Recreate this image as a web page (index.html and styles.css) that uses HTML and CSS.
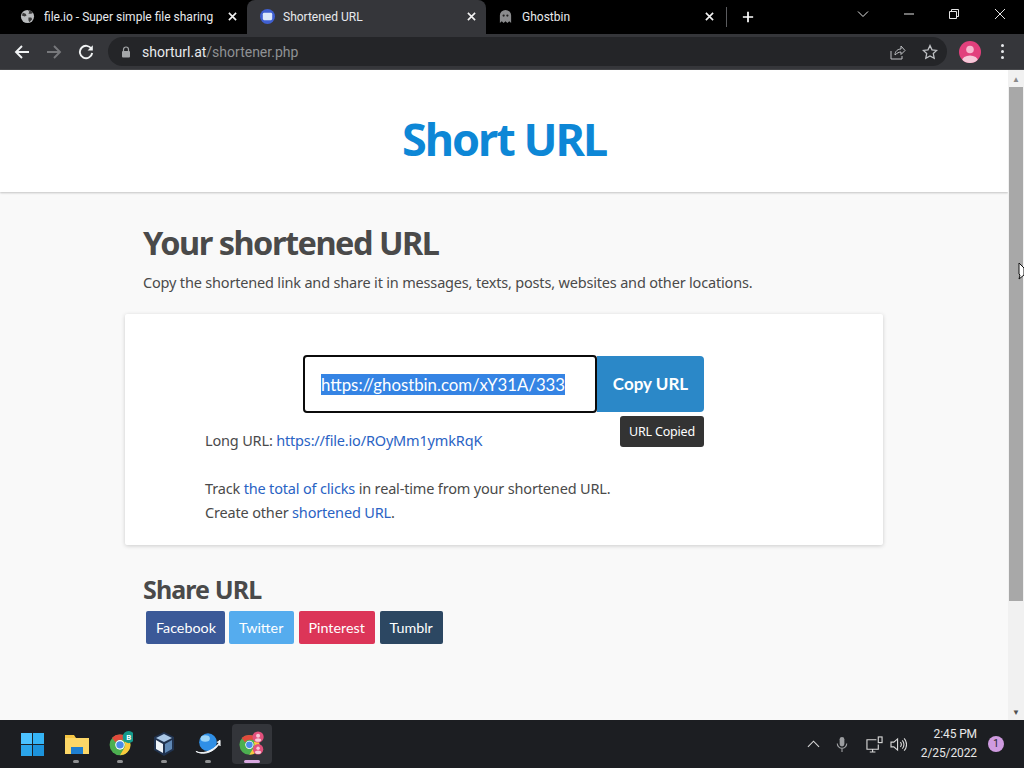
FILE: index.html
```html
<!DOCTYPE html>
<html lang="en">
<head>
<meta charset="utf-8">
<title>Shortened URL</title>
<link rel="stylesheet" href="styles.css">
</head>
<body>
<div class="tabstrip">
  <div class="tab tab-first">
    <svg class="favicon" viewBox="0 0 16 16"><circle cx="8" cy="8" r="7" fill="#b9bbbd"/><path d="M3 4l3 1 1 2-2 1-3-1zM9 9l3 0 1 2-3 3-1-2z" fill="#3a3a3a"/><path d="M8 1l2 2-1 2 3 0 2-1-2-2z" fill="#3a3a3a"/></svg>
    <span class="tab-title">file.io - Super simple file sharing</span>
    <svg class="tab-x" viewBox="0 0 10 10"><path d="M1 1l8 8M9 1l-8 8"/></svg>
  </div>
  <div class="tab tab-active">
    <svg class="favicon" viewBox="0 0 16 16"><circle cx="8" cy="8" r="8" fill="#3f5fd0"/><rect x="3" y="4" width="10" height="8" rx="1.500" fill="#dce8fa"/></svg>
    <span class="tab-title">Shortened URL</span>
    <svg class="tab-x" viewBox="0 0 10 10"><path d="M1 1l8 8M9 1l-8 8"/></svg>
  </div>
  <div class="tab tab-last">
    <svg class="favicon" viewBox="0 0 16 16"><path d="M2 15V7a6 6 0 0 1 12 0v8l-2-2-2 2-2-2-2 2-2-2z" fill="#8a8b8d"/><circle cx="6" cy="7" r="1.200" fill="#222"/><circle cx="10" cy="7" r="1.200" fill="#222"/></svg>
    <span class="tab-title">Ghostbin</span>
    <svg class="tab-x" viewBox="0 0 10 10"><path d="M1 1l8 8M9 1l-8 8"/></svg>
  </div>
  <div class="tab-sep"></div>
  <svg class="new-tab" viewBox="0 0 14 14"><path d="M7 1v12M1 7h12"/></svg>
  <div class="win-controls">
    <svg class="win-ico" viewBox="0 0 12 12"><path d="M1 3.500l5 5 5-5"/></svg>
    <svg class="win-ico" viewBox="0 0 12 12"><path d="M1 6h10"/></svg>
    <svg class="win-ico" viewBox="0 0 12 12"><path d="M1.500 3.500h7v7h-7zM3.500 3.500v-2h7v7h-2"/></svg>
    <svg class="win-ico" viewBox="0 0 12 12"><path d="M1 1l10 10M11 1L1 11"/></svg>
  </div>
</div>
<div class="toolbar">
  <svg class="nav-ico" viewBox="0 0 16 16"><path d="M15 8H2M8 2L2 8l6 6"/></svg>
  <svg class="nav-ico nav-dim" viewBox="0 0 16 16"><path d="M1 8h13M8 2l6 6-6 6"/></svg>
  <svg class="nav-ico" viewBox="0 0 16 16"><path d="M13.500 5A6.200 6.200 0 1 0 14.200 9"/><path class="solid" d="M14.800 1.200v5.200H9.600z"/></svg>
  <div class="omnibox">
    <svg class="lock" viewBox="0 0 10 12"><path d="M2.500 5V3.500a2.500 2.500 0 0 1 5 0V5" fill="none" stroke="#a4a6a8" stroke-width="1.200"/><rect x="1" y="5" width="8" height="6.500" rx="1" fill="#a4a6a8"/></svg>
    <span class="url"><span class="url-host">shorturl.at</span><span class="url-path">/shortener.php</span></span>
    <svg class="omni-ico omni-share" viewBox="0 0 16 16"><path d="M1 7v8h11v-3M5 11c0-4 3-6 6-6V2l4 4.500-4 4V8c-2 0-4 1-6 3z"/></svg>
    <svg class="omni-ico" viewBox="0 0 16 16"><path d="M8 1.500l2 4.300 4.700.6-3.400 3.200.9 4.700L8 11.900l-4.200 2.400.9-4.700L1.300 6.400 6 5.800z"/></svg>
  </div>
  <svg class="avatar" viewBox="0 0 22 22"><defs><clipPath id="av"><circle cx="11" cy="11" r="11"/></clipPath></defs><circle cx="11" cy="11" r="11" fill="#e2407c"/><circle cx="11" cy="8.500" r="3.800" fill="#f6b8ce"/><ellipse cx="11" cy="20" rx="8" ry="5.500" fill="#f6c8d8" clip-path="url(#av)"/></svg>
  <div class="kebab"><i></i><i></i><i></i></div>
</div>
<div class="viewport">
  <div class="page">
    <header class="site-head"><h1 class="logo">Short URL</h1></header>
    <main class="main">
      <div class="container">
        <h2 class="title">Your shortened URL</h2>
        <p class="lead">Copy the shortened link and share it in messages, texts, posts, websites and other locations.</p>
        <section class="card">
          <div class="copy-row">
            <div class="url-input"><span class="selected">https://ghostbin.com/xY31A/333</span></div>
            <div class="copy-btn">Copy URL<span class="tooltip">URL Copied</span></div>
          </div>
          <p class="line line-long">Long URL: <a href="#">https://file.io/ROyMm1ymkRqK</a></p>
          <p class="line line-track">Track <a href="#">the total of clicks</a> in real-time from your shortened URL.</p>
          <p class="line">Create other <a href="#">shortened URL</a>.</p>
        </section>
        <h3 class="share-title">Share URL</h3>
        <div class="share-row">
          <a class="share fb" href="#">Facebook</a>
          <a class="share tw" href="#">Twitter</a>
          <a class="share pi" href="#">Pinterest</a>
          <a class="share tu" href="#">Tumblr</a>
        </div>
      </div>
    </main>
  </div>
  <div class="scrollbar">
    <div class="sb-arrow">▲</div>
    <div class="sb-track"><div class="sb-thumb"></div></div>
    <div class="sb-arrow sb-down">▼</div>
    <svg class="cursor" viewBox="0 0 6 18"><path d="M1 1l5 5v7l-5 4 1-4-1-1V5z" fill="#fff" stroke="#111"/></svg>
  </div>
</div>
<footer class="taskbar">
  <div class="task-icons">
    <div class="task task-win"><svg viewBox="0 0 24 24"><rect x="0" y="0" width="11.500" height="11.500" fill="#4cc2ff"/><rect x="12.500" y="0" width="11.500" height="11.500" fill="#35b4f5"/><rect x="0" y="12.500" width="11.500" height="11.500" fill="#2ba5ea"/><rect x="12.500" y="12.500" width="11.500" height="11.500" fill="#1c93dc"/></svg></div>
    <div class="task dot"><svg viewBox="-1 0 26 24"><path d="M1 3h9l2 3h13v16H1z" fill="#f5c543"/><path d="M1 6h24v16H1z" fill="#fcd767"/><rect x="7" y="15" width="12" height="7" fill="#1f7fd0"/></svg></div>
    <div class="task dot"><svg viewBox="-2 0 30 30"><circle cx="13" cy="16" r="12" fill="#4caf50"/><path d="M13 4a12 12 0 0 1 10.400 6H13a6 6 0 0 0-5.200 3L3.800 8A12 12 0 0 1 13 4z" fill="#e14b3c"/><path d="M23.400 10A12 12 0 0 1 13 28l5.200-9a6 6 0 0 0 0-6z" fill="#f9c93c"/><circle cx="13" cy="16" r="5.500" fill="#fff"/><circle cx="13" cy="16" r="4.300" fill="#4a8ce8"/><circle cx="23" cy="7" r="7" fill="#149a8c"/><text x="23" y="10" class="badge-b">B</text></svg></div>
    <div class="task dot"><svg viewBox="0 0 24 26"><path d="M12 1l10 5v13l-10 6-10-6V6z" fill="#20324e"/><path d="M12 3l8 4-8 4-8-4z" fill="#a9c7e6"/><path d="M4 9l7 4v9l-7-4z" fill="#eef3f8"/><path d="M20 9l-7 4v9l7-4z" fill="#5f88b5"/></svg></div>
    <div class="task dot"><svg viewBox="0 0 28 26"><circle cx="14" cy="11" r="9.500" fill="#2f8fe6"/><ellipse cx="11" cy="7" rx="5" ry="3.500" fill="#9ad4f8"/><path d="M1 21c6 3 17 1 25-9l-2-1 3-2 0 6-1-2c-5 8-16 13-25 8z" fill="#f4f8fc" stroke="#f4f8fc"/></svg></div>
    <div class="task task-current"><svg viewBox="0 0 30 30"><circle cx="12" cy="16" r="11.500" fill="#4caf50"/><path d="M12 4.500a11.500 11.500 0 0 1 10 5.700H12a6 6 0 0 0-5 2.800L3 8a11.500 11.500 0 0 1 9-3.500z" fill="#e14b3c"/><path d="M22 10a11.500 11.500 0 0 1-10 17.500l5-8.500a6 6 0 0 0 0-6z" fill="#f9c93c"/><circle cx="12" cy="16" r="4.800" fill="#fff"/><circle cx="12" cy="16" r="3.800" fill="#4a8ce8"/><circle cx="22" cy="7" r="6.500" fill="#e2507c"/><circle cx="22" cy="5.500" r="2.300" fill="#f6c8d8"/><ellipse cx="22" cy="10.500" rx="3.500" ry="2" fill="#f6c8d8"/><circle cx="22" cy="21" r="6" fill="#e2507c"/><circle cx="22" cy="20" r="2" fill="#f6c8d8"/><ellipse cx="22" cy="24.500" rx="3.500" ry="2" fill="#f6c8d8"/></svg></div>
  </div>
  <div class="tray">
    <svg class="tray-ico tray-up" viewBox="0 0 14 8"><path d="M1 7l6-6 6 6"/></svg>
    <svg class="tray-ico tray-mic" viewBox="0 0 12 18"><rect x="3.500" y="1" width="5" height="10" rx="2.500" fill="#9b9da0" stroke="none"/><path d="M1 8a5 5 0 0 0 10 0M6 13v4"/></svg>
    <svg class="tray-ico tray-net" viewBox="0 0 18 18"><path d="M11 4H1v10h12V9M7 14v3M4 17h6"/><rect x="13" y="1" width="4" height="6"/></svg>
    <svg class="tray-ico tray-vol" viewBox="0 0 18 16"><path d="M1 5.500h3L8 2v12l-4-3.500H1zM11 5.500a3.500 3.500 0 0 1 0 5M13 3.500a6.500 6.500 0 0 1 0 9M15 1.500a9.500 9.500 0 0 1 0 13"/></svg>
    <div class="clock"><div>2:45 PM</div><div>2/25/2022</div></div>
    <div class="notif">1</div>
  </div>
</footer>
</body>
</html>
```

FILE: styles.css
```css
* { box-sizing: border-box; }
html, body { margin: 0; padding: 0; }
body {
  width: 1024px;
  height: 768px;
  overflow: hidden;
  display: flex;
  flex-direction: column;
  font-family: "Noto Sans", "Open Sans", sans-serif;
  background: #000;
}
svg { display: block; flex: none; }

/* Tab strip */
.tabstrip { height: 34px; background: #000; display: flex; align-items: flex-end; flex: none; }
.tab {
  width: 239px; height: 34px; padding: 0 10px 1px 20px;
  display: flex; align-items: center;
  color: #e8eaed;
  font: 12px "Roboto", sans-serif;
}
.tab-first { width: 247px; }
.tab-active { background: #35363a; border-radius: 8px 8px 0 0; padding-left: 13px; padding-right: 10px; }
.tab-last { padding-left: 12px; padding-right: 11px; }
.favicon { width: 15px; height: 15px; margin-right: 9px; }
.tab-active .favicon { margin-right: 8px; }
.tab-title { flex: 1; white-space: nowrap; overflow: hidden; }
.tab-x { width: 9px; height: 9px; fill: none; stroke: #f1f1f1; stroke-width: 1.800; }
.tab-sep { width: 1px; height: 20px; background: #5a5b5e; margin: 0 0 7px 1px; align-self: flex-end; }
.new-tab { width: 12px; height: 12px; margin: 0 0 11px 15px; fill: none; stroke: #fff; stroke-width: 2; }
.win-controls { margin-left: auto; display: flex; align-self: flex-start; gap: 33.600px; padding: 8px 18px 0 0; }
.win-ico { width: 12px; height: 12px; fill: none; stroke: #e4e4e4; stroke-width: 1; }

/* Toolbar */
.toolbar {
  height: 36px; flex: none; background: #35363a;
  display: flex; align-items: center; padding: 0 0 0 14px;
  border-bottom: 1px solid #47484b;
}
.nav-ico { width: 16px; height: 16px; margin-right: 16px; fill: none; stroke: #f1f3f4; stroke-width: 1.900; }
.nav-ico.nav-dim { stroke: #77787b; }
.nav-ico .solid { fill: #f1f3f4; stroke: none; }
.omnibox {
  width: 839px; height: 29px; margin-left: -2px; border-radius: 15px; background: #242528;
  display: flex; align-items: center; padding: 0 9px 0 13px;
}
.lock { width: 10px; height: 12px; margin-right: 11px; }
.url { flex: 1; font: 14px "Roboto", sans-serif; }
.url-host { color: #e8eaed; }
.url-path { color: #8f9194; }
.omni-ico { width: 16px; height: 16px; margin-left: 16px; fill: none; stroke: #bfc1c4; stroke-width: 1.300; }
.omni-share { stroke-width: 1; }
.avatar { width: 22px; height: 22px; margin-left: 12px; }
.kebab { display: flex; flex-direction: column; gap: 3px; margin-left: 20px; }
.kebab i { display: block; width: 3px; height: 3px; border-radius: 50%; background: #e8eaed; }

/* Viewport */
.viewport { height: 650px; flex: none; display: flex; background: #fff; }
.page { width: 1008px; display: flex; flex-direction: column; background: #f9f9f9; color: #4a4a4a; }
.site-head {
  height: 122px; flex: none; background: #fff;
  box-shadow: 0 1px 2px rgba(0,0,0,.22);
  display: flex; justify-content: center; align-items: center;
  position: relative;
}
.logo { margin: 0; color: #0d87d6; font: 700 45px/1 "Noto Sans", sans-serif; letter-spacing: -2px; padding-top: 15px; }
.main { flex: 1; }
.container { width: 758px; margin-left: 125px; }
.title { margin: 0; padding: 31px 0 0 18px; font: 700 32.500px/40px "Noto Sans", sans-serif; letter-spacing: -1.500px; color: #4a4a4a; }
.lead { margin: 0; padding: 8px 0 0 18px; font-size: 14.500px; line-height: 22px; letter-spacing: -.18px; color: #4a4a4a; }
.card {
  height: 231px; margin-top: 21px; background: #fff; border-radius: 2px;
  box-shadow: 0 1px 4px rgba(0,0,0,.18);
  padding: 41px 0 0 80px;
}
.copy-row { display: flex; align-items: center; margin-left: 98px; }
.url-input {
  width: 294px; height: 58px; border: 2px solid #0b0b0b; border-radius: 4px; background: #fff;
  display: flex; align-items: center; padding-left: 16px;
  font: 16.800px "Lato", sans-serif; position: relative; z-index: 1;
}
.selected { background: #3584e4; color: #fff; line-height: 21px; white-space: nowrap; }
.copy-btn {
  width: 107px; height: 56px; background: #2b88c8; color: #fff;
  border-radius: 0 4px 4px 0; font: 700 17px/56px "Lato", sans-serif; text-align: center;
  position: relative;
}
.tooltip {
  position: absolute; right: 0; top: 60px; width: 84px; height: 31px;
  background: #333; color: #fff; border-radius: 3px;
  font: 400 12.500px/31px "Noto Sans", sans-serif; letter-spacing: -.2px; text-align: center;
}
.line { margin: 0; font-size: 14.500px; line-height: 24px; letter-spacing: -.17px; color: #4a4a4a; }
.line a { color: #2a63c4; text-decoration: none; }
.line-long { margin-top: 15px; }
.line-track { margin-top: 24px; }
.share-title { margin: 0; padding: 28px 0 0 18px; font: 700 25px/32px "Noto Sans", sans-serif; letter-spacing: -.9px; color: #4a4a4a; }
.share-row { display: flex; gap: 4.500px; margin: 6px 0 0 21px; }
.share {
  height: 33px; padding: 0 10px; border-radius: 2px; color: #fff; text-decoration: none;
  font: 14.300px/33px "Lato", sans-serif;
}
.fb { background: #3b5998; width: 78.500px; }
.tw { background: #55acee; width: 65px; }
.pi { background: #dc3558; width: 76.500px; }
.tu { background: #2c4762; width: 63px; }

/* Scrollbar */
.scrollbar { width: 16px; background: #f1f1f1; display: flex; flex-direction: column; align-items: center; position: relative; }
.sb-arrow { height: 17px; font-size: 8px; line-height: 17px; color: #8a8a8a; }
.sb-down { color: #505050; }
.sb-track { flex: 1; width: 100%; }
.sb-thumb { height: 514px; margin: 0 1px; background: #a8a8a8; }
.cursor { position: absolute; right: 0; top: 192px; width: 6px; height: 18px; }

/* Taskbar */
.taskbar {
  height: 48px; flex: none; background: #1c1e22; color: #e8e8e8;
  display: flex; align-items: center; justify-content: space-between;
}
.task-icons { display: flex; padding-left: 12px; gap: 4px; }
.task { width: 40px; height: 40px; border-radius: 4px; display: flex; align-items: center; justify-content: center; position: relative; }
.task svg { width: 26px; height: 26px; }
.task-win svg { width: 23px; height: 23px; }
.dot::after { content: ""; position: absolute; bottom: 1px; left: 17px; width: 6px; height: 3px; border-radius: 2px; background: #8f9092; }
.task-current { background: #33353a; }
.task-current::after { content: ""; position: absolute; bottom: 1px; left: 12px; width: 16px; height: 3px; border-radius: 2px; background: #d8a8e0; }
.badge-b { font: 700 9px "Roboto", sans-serif; fill: #fff; text-anchor: middle; }
.tray { display: flex; align-items: center; padding-right: 20px; }
.tray-ico { fill: none; stroke: #d8d8d8; stroke-width: 1.200; }
.tray-up { width: 13px; height: 8px; margin-right: 16.500px; }
.tray-mic { width: 12px; height: 17px; stroke: #9b9da0; margin-right: 18px; }
.tray-net { width: 17px; height: 17px; margin-right: 6.500px; }
.tray-vol { width: 17px; height: 15px; margin-right: 14px; }
.clock { font: 12px/19px "Roboto", sans-serif; letter-spacing: -.1px; text-align: right; margin-right: 11px; }
.notif { width: 16px; height: 16px; border-radius: 50%; background: #cf9be0; color: #222; font: 10px/16px "Roboto", sans-serif; text-align: center; }
```
